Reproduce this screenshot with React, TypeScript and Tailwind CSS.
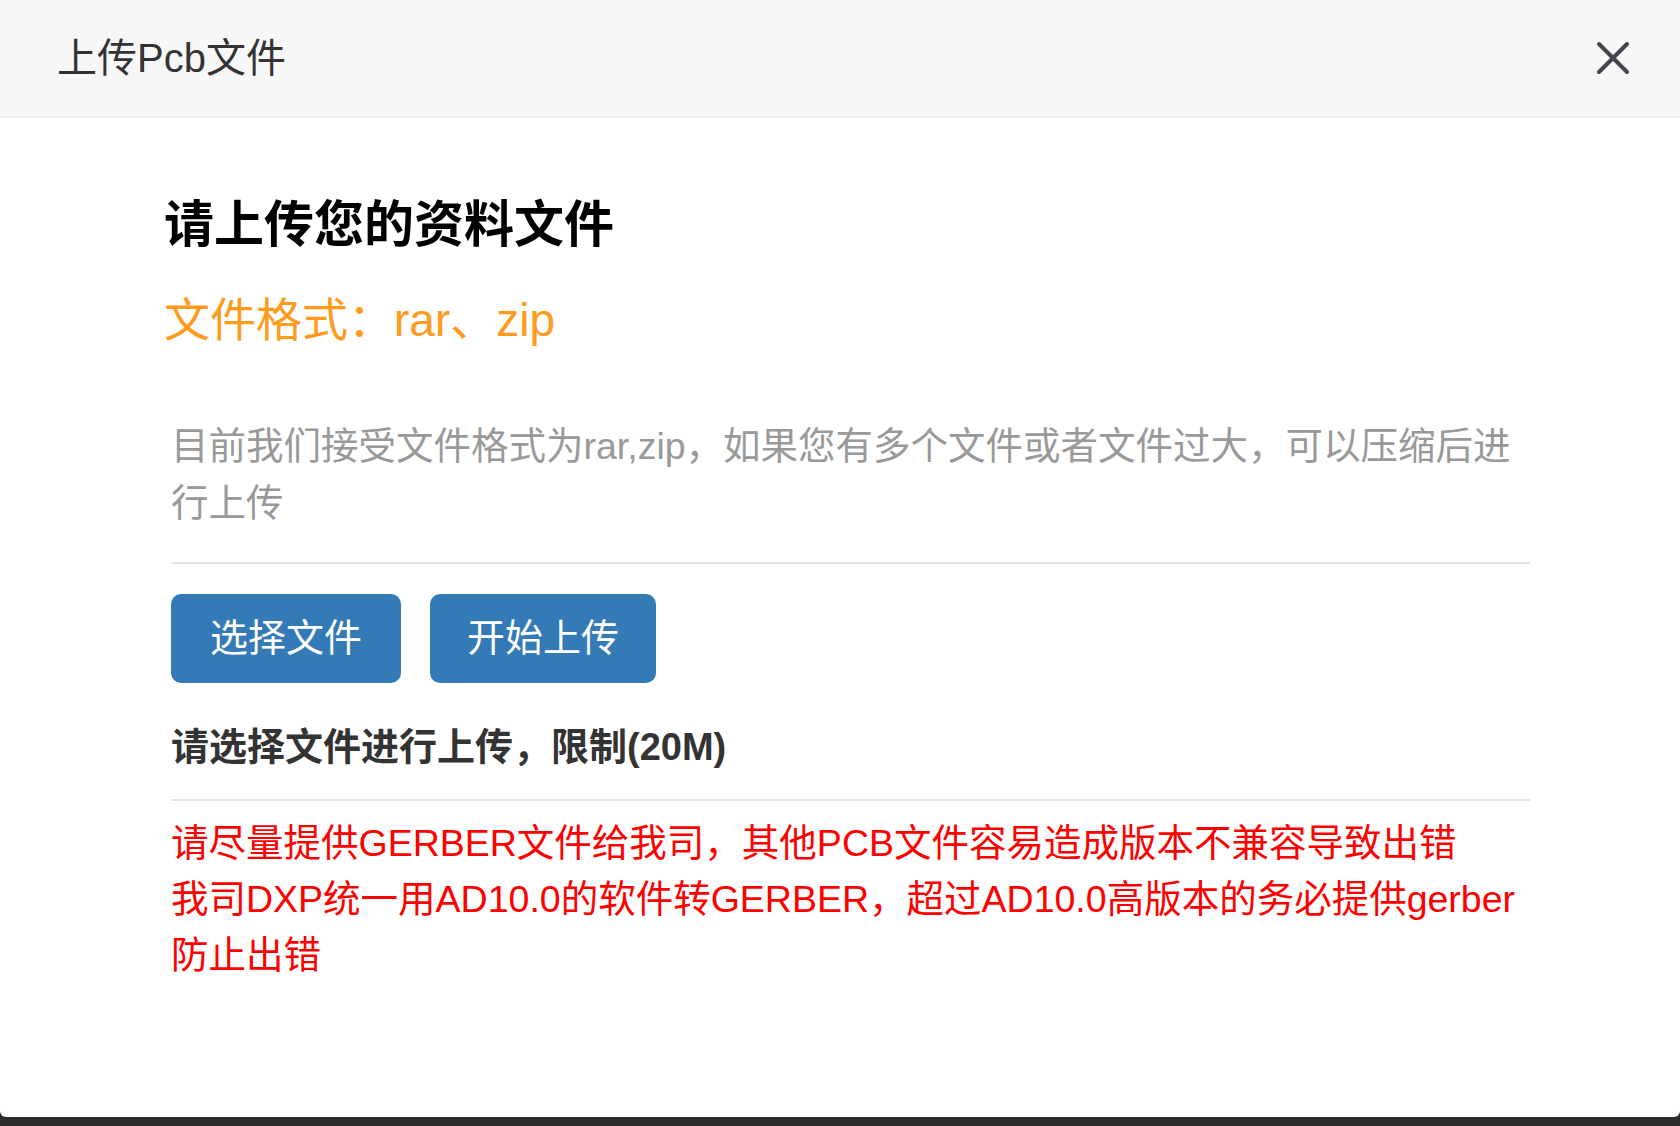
import React from 'react';

const font = { fontFamily: '"Liberation Sans", "Noto Sans CJK SC", sans-serif' };

export default function App() {
  return (
    <div className="w-[1680px] h-[1126px] bg-[#2b2b2b] flex flex-col" style={font}>
      <div className="h-[1117px] bg-white rounded-b-[6px] flex flex-col overflow-hidden">
        {/* Header */}
        <div className="h-[118px] shrink-0 bg-[#f7f7f7] border-b-2 border-[#ececec] flex items-center justify-between pl-[57px] pr-[50px]">
          <h4 className="text-[40px] leading-none text-[#333]">上传Pcb文件</h4>
          <button className="w-[34px] h-[34px] flex items-center justify-center">
            <svg width="34" height="34" viewBox="0 0 34 34">
              <path d="M3 3 L31 31 M31 3 L3 31" stroke="#44444f" strokeWidth="4" strokeLinecap="round" />
            </svg>
          </button>
        </div>

        {/* Body */}
        <div className="pl-[164px] pr-[150px]">
          <h3 className="mt-[77px] text-[50px] leading-[60px] font-bold text-black">请上传您的资料文件</h3>
          <p className="mt-[36px] text-[46px] leading-[58px] text-[#ff9a1a]">文件格式：rar、zip</p>

          <div className="pl-[7px]">
            <p className="mt-[69px] text-[37.5px] leading-[57px] text-[#999]">
              目前我们接受文件格式为rar,zip，如果您有多个文件或者文件过大，可以压缩后进行上传
            </p>
            <div className="mt-[30px] h-[2px] bg-[#e2e2e2]" />

            <div className="mt-[30px] flex gap-[29px]">
              <button className="h-[89px] w-[230px] rounded-[10px] bg-[#337ab7] text-white text-[38px]">选择文件</button>
              <button className="h-[89px] w-[226px] rounded-[10px] bg-[#337ab7] text-white text-[38px]">开始上传</button>
            </div>

            <p className="mt-[36px] text-[38px] leading-[56px] font-bold text-[#333]">请选择文件进行上传，限制(20M)</p>
            <div className="mt-[24px] h-[2px] bg-[#e2e2e2]" />

            <div className="mt-[14px] text-[37.5px] leading-[56px] text-[#ff0000]">
              <p>请尽量提供GERBER文件给我司，其他PCB文件容易造成版本不兼容导致出错</p>
              <p>我司DXP统一用AD10.0的软件转GERBER，超过AD10.0高版本的务必提供gerber防止出错</p>
            </div>
          </div>
        </div>
      </div>
    </div>
  );
}
